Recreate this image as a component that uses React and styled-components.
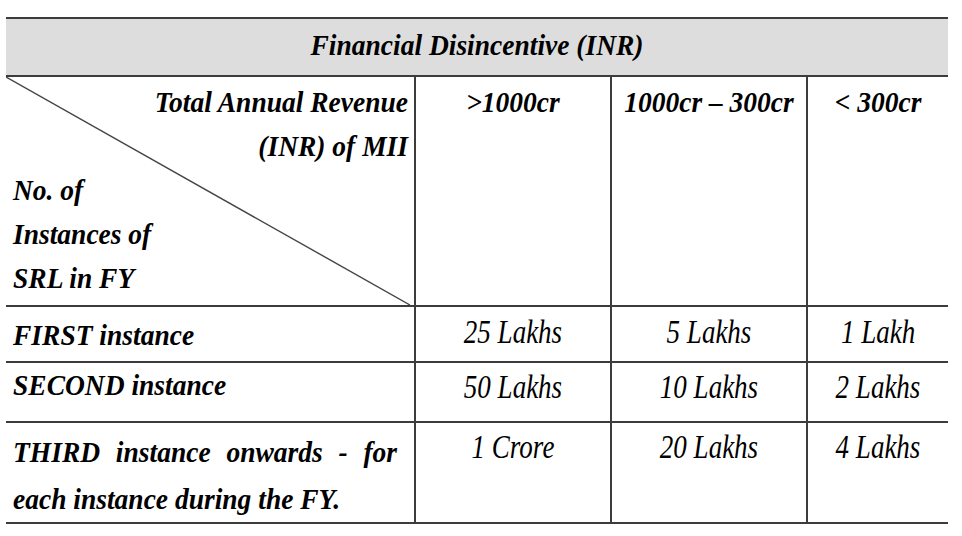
import React from "react";
import styled, { createGlobalStyle } from "styled-components";

const GlobalStyle = createGlobalStyle`
  body {
    margin: 0;
    background: #ffffff;
  }
`;

const LINE = "#3c3c3c";

const Table = styled.div`
  display: grid;
  grid-template-columns: 408px 196px 196px 142px;
  width: 942px;
  margin: 17px 0 0 6px;
  font-family: "Liberation Serif", serif;
  font-style: italic;
  color: #000000;
`;

const Band = styled.div`
  grid-column: 1 / -1;
  box-sizing: border-box;
  height: 60px;
  padding-top: 4px;
  background: #dddddd;
  border-top: 2px solid ${LINE};
  border-bottom: 2px solid ${LINE};
  text-align: center;
  font-size: 27.5px;
  font-weight: 700;
  line-height: 44px;
`;

const Cell = styled.div`
  position: relative;
  box-sizing: border-box;
  height: ${(p) => p.$h}px;
  padding: ${(p) => p.$pt}px ${(p) => p.$pr || 0}px 0 ${(p) => p.$pl || 0}px;
  border-bottom: 2px solid ${LINE};
  border-left: ${(p) => (p.$divider ? `2px solid ${LINE}` : "none")};
  text-align: ${(p) => p.$align || "left"};
  font-size: ${(p) => (p.$bold ? 27.5 : 27)}px;
  font-weight: ${(p) => (p.$bold ? 700 : 400)};
  line-height: ${(p) => p.$lh || 44}px;
`;

const Corner = styled(Cell)`
  display: flex;
  flex-direction: column;
  justify-content: space-between;
  padding-bottom: 8px;
`;

const Tall = styled.span`
  display: inline-block;
  transform: scaleY(${(p) => p.$y || 1.1});
  white-space: nowrap;
`;

const Line = styled.div`
  text-align: ${(p) => p.$align || "left"};
  text-align-last: ${(p) => (p.$justify ? "justify" : "auto")};
  transform: scaleY(1.1);
`;

const Diagonal = styled.svg`
  position: absolute;
  left: 0;
  top: 0;
  width: 100%;
  height: 100%;
  pointer-events: none;
`;

const columns = [">1000cr", "1000cr – 300cr", "< 300cr"];

const rows = [
  {
    label: [{ text: "FIRST instance" }],
    values: ["25 Lakhs", "5 Lakhs", "1 Lakh"],
    h: 56,
    pt: 6,
    vpt: 3,
  },
  {
    label: [{ text: "SECOND instance" }],
    values: ["50 Lakhs", "10 Lakhs", "2 Lakhs"],
    h: 60,
    pt: 0,
    vpt: 2,
  },
  {
    label: [
      { text: "THIRD instance onwards - for", justify: true },
      { text: "each instance during the FY." },
    ],
    values: ["1 Crore", "20 Lakhs", "4 Lakhs"],
    h: 101,
    pt: 5,
    vpt: 2,
    lh: 47,
  },
];

export default function App() {
  return (
    <>
      <GlobalStyle />
      <Table>
        <Band>
          <Tall>Financial Disincentive (INR)</Tall>
        </Band>

        <Corner $h={230} $pt={3} $pl={7} $pr={6} $bold>
          <Diagonal viewBox="0 0 408 228" preserveAspectRatio="none">
            <line x1="0" y1="0" x2="404" y2="228" stroke="#444" strokeWidth="1.4" />
          </Diagonal>
          <div>
            <Line $align="right">Total Annual Revenue</Line>
            <Line $align="right">(INR) of MII</Line>
          </div>
          <div>
            <Line>No. of</Line>
            <Line>Instances of</Line>
            <Line>SRL in FY</Line>
          </div>
        </Corner>
        {columns.map((c) => (
          <Cell key={c} $h={230} $pt={3} $divider $align="center" $bold>
            <Tall>{c}</Tall>
          </Cell>
        ))}

        {rows.map((r) => (
          <React.Fragment key={r.values[0]}>
            <Cell $h={r.h} $pt={r.pt} $pl={7} $pr={17} $lh={r.lh} $bold>
              {r.label.map((l) => (
                <Line key={l.text} $justify={l.justify}>
                  {l.text}
                </Line>
              ))}
            </Cell>
            {r.values.map((v) => (
              <Cell key={v} $h={r.h} $pt={r.vpt} $divider $align="center">
                <Tall $y={1.22}>{v}</Tall>
              </Cell>
            ))}
          </React.Fragment>
        ))}
      </Table>
    </>
  );
}
